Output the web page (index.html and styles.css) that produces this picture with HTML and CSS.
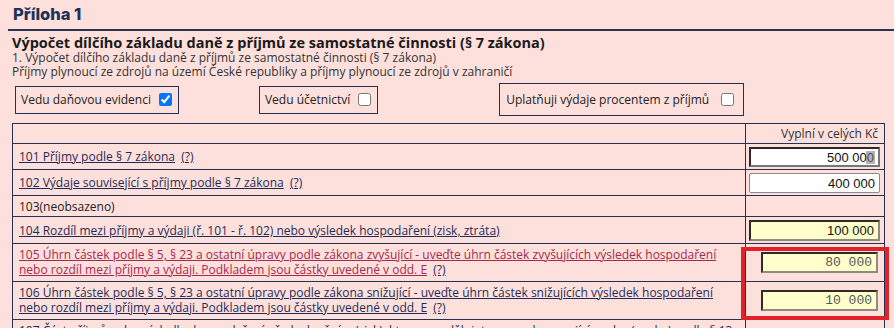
FILE: index.html
```html
<!DOCTYPE html>
<html lang="cs">
<head>
  <meta charset="UTF-8" />
  <title>Příloha 1 – Výpočet dílčího základu daně</title>
  <link rel="stylesheet" href="styles.css">
</head>
<body>
  <header class="page-head">
    <h1>Příloha 1</h1>
  </header>

  <section class="section">
    <h2>Výpočet dílčího základu daně z příjmů ze samostatné činnosti (§ 7 zákona)</h2>
    <p class="sub">1. Výpočet dílčího základu daně z příjmů ze samostatné činnosti (§ 7 zákona)</p>
    <p class="sub">Příjmy plynoucí ze zdrojů na území České republiky a příjmy plynoucí ze zdrojů v zahraničí</p>

    <div class="options">
      <label class="opt opt-first">Vedu daňovou evidenci <input type="checkbox" checked /></label>
      <label class="opt opt-second">Vedu účetnictví <input type="checkbox" /></label>
      <label class="opt opt-wide">Uplatňuji výdaje procentem z příjmů <input type="checkbox" /></label>
    </div>

    <div class="table-wrap">
      <table class="rows">
        <tr class="head">
          <td></td>
          <td class="val">Vyplní v celých Kč</td>
        </tr>
        <tr>
          <td><a href="#">101 Příjmy podle § 7 zákona</a> &nbsp;<a href="#">(?)</a></td>
          <td class="val"><span class="field"><input class="num focus" type="text" value="500 000" /><span class="caret"></span></span></td>
        </tr>
        <tr>
          <td><a href="#">102 Výdaje související s příjmy podle § 7 zákona</a> &nbsp;<a href="#">(?)</a></td>
          <td class="val"><input class="num" type="text" value="400 000" /></td>
        </tr>
        <tr class="short">
          <td>103(neobsazeno)</td>
          <td class="val"></td>
        </tr>
        <tr>
          <td><a href="#">104 Rozdíl mezi příjmy a výdaji (ř. 101 - ř. 102) nebo výsledek hospodaření (zisk, ztráta)</a></td>
          <td class="val"><input class="num calc" type="text" value="100 000" readonly /></td>
        </tr>
        <tr class="tall">
          <td><a class="visited" href="#">105 Úhrn částek podle § 5, § 23 a ostatní úpravy podle zákona zvyšující - uveďte úhrn částek zvyšujících výsledek hospodaření nebo rozdíl mezi příjmy a výdaji. Podkladem jsou částky uvedené v odd. E</a> &nbsp;<a href="#">(?)</a></td>
          <td class="val"><input class="num calc mono" type="text" value="80 000" readonly /></td>
        </tr>
        <tr class="tall">
          <td><a href="#">106 Úhrn částek podle § 5, § 23 a ostatní úpravy podle zákona snižující - uveďte úhrn částek snižujících výsledek hospodaření nebo rozdíl mezi příjmy a výdaji. Podkladem jsou částky uvedené v odd. E</a> &nbsp;<a href="#">(?)</a></td>
          <td class="val"><input class="num calc mono" type="text" value="10 000" readonly /></td>
        </tr>
        <tr class="tall">
          <td><a href="#">107 Část příjmů nebo výsledku hospodaření před zdaněním (zisk), kterou rozdělujete na spolupracující osobu (osoby) podle § 13 zákona</a> &nbsp;<a href="#">(?)</a></td>
          <td class="val"></td>
        </tr>
      </table>
      <div class="highlight"></div>
    </div>
  </section>
</body>
</html>
```

FILE: styles.css
```css
html, body {
  height: 100%;
  overflow: hidden;
}
body {
  margin: 0;
  background-color: #fde0dc;
  font-family: "Open Sans", "Noto Sans", sans-serif;
  font-size: 12px;
  color: #222;
}
.page-head {
  margin-left: 8px;
  padding: 3px 0 0 5px;
  height: 26px;
  border-bottom: 2px solid #2b3350;
}
.page-head h1 {
  margin: 0;
  font-family: "Inter", "Lato", sans-serif;
  font-size: 16.5px;
  font-weight: 800;
  color: #1d3259;
  line-height: 22px;
}
.section {
  padding: 4px 9px 0 12px;
}
.section h2 {
  margin: 0;
  font-size: 14.5px;
  font-weight: 700;
  line-height: 16px;
  color: #1a1a1a;
}
.sub {
  margin: 0;
  line-height: 14px;
  color: #333;
}
.options {
  display: flex;
  align-items: center;
  margin-top: 4px;
  height: 33px;
}
.opt {
  display: flex;
  align-items: center;
  border: 1px solid #26304f;
  height: 26px;
  padding: 0 6px 0 5px;
  color: #222;
}
.opt input {
  margin: 0 0 0 8px;
  width: 13px;
  height: 13px;
}
.opt-first {
  margin-left: 3px;
}
.opt-second {
  margin-left: 80px;
}
.opt-wide {
  margin-left: 121px;
  height: 31px;
  padding: 0 9px 0 6px;
}
.opt-wide input {
  margin-left: 12px;
}
.table-wrap {
  position: relative;
  margin-top: 7px;
}
.rows {
  width: 100%;
  border-collapse: collapse;
  table-layout: fixed;
}
.rows td {
  border: 1px solid #26304f;
  padding: 3px 6px;
  line-height: 15px;
  vertical-align: middle;
}
.rows td.val {
  width: 129px;
  text-align: right;
  padding: 3px 6px 2px 3px;
}
.rows .head td {
  padding-top: 2px;
  padding-bottom: 2px;
  color: #333;
}
.rows .short td {
  padding-top: 3px;
  padding-bottom: 2px;
}
.rows .tall td {
  padding-top: 3px;
  padding-bottom: 4px;
}
.rows a {
  color: #1f2b57;
}
.rows a.visited {
  color: #a3294e;
}
.field {
  position: relative;
  display: inline-block;
  vertical-align: middle;
}
.num {
  box-sizing: border-box;
  width: 131px;
  height: 20px;
  margin: 0;
  padding: 0 4px;
  font-family: "Liberation Sans", Arial, sans-serif;
  font-size: 13px;
  text-align: right;
  color: #111;
  background: #fff;
  border: 1px solid #8a8a8a;
  border-radius: 2px;
  vertical-align: middle;
}
.num.focus {
  border: 2px solid #2a2a2a;
  border-right-color: #777;
  border-bottom-color: #777;
  border-radius: 0;
}
.caret {
  position: absolute;
  right: 5px;
  top: 4px;
  width: 9px;
  height: 13px;
  background: rgba(120, 120, 120, 0.55);
}
.num.calc {
  background: #ffffcc;
  border: 2px solid #2e2a26;
  border-right-color: #8d8a80;
  border-bottom-color: #8d8a80;
  border-radius: 0;
  height: 21px;
}
.num.mono {
  width: 117px;
  font-family: "Liberation Mono", "Courier New", monospace;
  color: #555;
}
.highlight {
  position: absolute;
  left: 729px;
  top: 124px;
  width: 140px;
  height: 65px;
  border: 4px solid #e0222b;
}
```
